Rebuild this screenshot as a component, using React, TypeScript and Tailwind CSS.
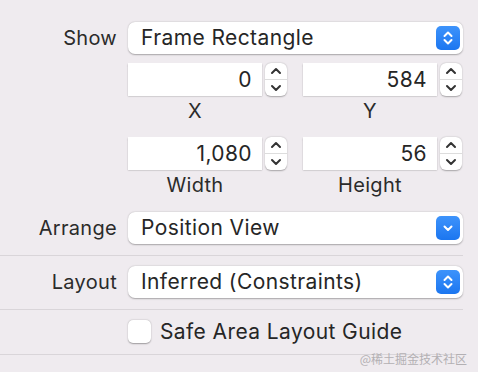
import React from "react"

const font = { fontFamily: "Inter, 'Noto Sans', sans-serif" }

const UpDown = () => (
  <svg width="12" height="16" viewBox="0 0 12 16" fill="none" stroke="white" strokeWidth="2" strokeLinecap="round" strokeLinejoin="round">
    <path d="M2.5 6 L6 2.5 L9.5 6" />
    <path d="M2.5 10 L6 13.5 L9.5 10" />
  </svg>
)

const Down = () => (
  <svg width="12" height="10" viewBox="0 0 12 10" fill="none" stroke="white" strokeWidth="2" strokeLinecap="round" strokeLinejoin="round">
    <path d="M2.5 3.5 L6 7 L9.5 3.5" />
  </svg>
)

const Popup = ({ text, single }: { text: string; single?: boolean }) => (
  <div className="flex h-[32px] w-[335px] items-center justify-between rounded-[7px] bg-white pl-[13px] pr-[3px] shadow-[0_0.5px_1.5px_rgba(0,0,0,0.3)]">
    <span className="text-[21px] leading-[24px] tracking-[0.4px] text-[#262626]">{text}</span>
    <div className="flex h-[24px] w-[24px] items-center justify-center rounded-[5px] bg-gradient-to-b from-[#3d93fb] to-[#1b76f0]">
      {single ? <Down /> : <UpDown />}
    </div>
  </div>
)

const Stepper = () => (
  <div className="flex h-[33px] w-[22px] flex-col rounded-[6px] bg-white shadow-[0_0.5px_1.5px_rgba(0,0,0,0.3)]">
    <div className="flex flex-1 items-center justify-center border-b border-[#dddddd]">
      <svg width="12" height="8" viewBox="0 0 12 8" fill="none" stroke="#333" strokeWidth="2" strokeLinecap="round" strokeLinejoin="round">
        <path d="M2 6 L6 2 L10 6" />
      </svg>
    </div>
    <div className="flex flex-1 items-center justify-center">
      <svg width="12" height="8" viewBox="0 0 12 8" fill="none" stroke="#333" strokeWidth="2" strokeLinecap="round" strokeLinejoin="round">
        <path d="M2 2 L6 6 L10 2" />
      </svg>
    </div>
  </div>
)

const NumField = ({ value, label }: { value: string; label: string }) => (
  <div className="flex w-[159px] flex-col">
    <div className="flex items-center gap-[3px]">
      <div className="flex h-[33px] w-[134px] items-center justify-end bg-white pr-[10px] text-[21px] tracking-[0.4px] text-[#262626] shadow-[0_0.5px_1.5px_rgba(0,0,0,0.3)]">
        {value}
      </div>
      <Stepper />
    </div>
    <div className="mt-[3px] w-[134px] text-center text-[20px] leading-[24px] tracking-[0.3px] text-[#2b2b2b]">{label}</div>
  </div>
)

const Row = ({ label, children }: { label: string; children: React.ReactNode }) => (
  <div className="flex items-center">
    <div className="w-[117px] text-right text-[20px] leading-[24px] tracking-[0.3px] text-[#2b2b2b]">{label}</div>
    <div className="ml-[11px]">{children}</div>
  </div>
)

export default function App() {
  return (
    <div className="flex h-[372px] w-[478px] flex-col overflow-hidden bg-[#efebef]" style={font}>
      <div className="pt-[22px]">
        <Row label="Show">
          <Popup text="Frame Rectangle" />
        </Row>
      </div>

      <div className="ml-[128px] mt-[9px] flex gap-[16px]">
        <NumField value="0" label="X" />
        <NumField value="584" label="Y" />
      </div>
      <div className="ml-[128px] mt-[14px] flex gap-[16px]">
        <NumField value="1,080" label="Width" />
        <NumField value="56" label="Height" />
      </div>

      <div className="mt-[15px]">
        <Row label="Arrange">
          <Popup text="Position View" single />
        </Row>
      </div>

      <div className="mt-[11px] h-px w-[463px] bg-[#d9d5d9]" />

      <div className="mt-[10px]">
        <Row label="Layout">
          <Popup text="Inferred (Constraints)" />
        </Row>
      </div>

      <div className="mt-[11px] h-px w-[463px] bg-[#d9d5d9]" />

      <div className="ml-[128px] mt-[10px] flex h-[23px] items-center gap-[9px]">
        <div className="h-[23px] w-[23px] rounded-[5px] bg-white shadow-[0_0.5px_1.5px_rgba(0,0,0,0.35)]" />
        <span className="text-[21px] leading-[24px] tracking-[0.4px] text-[#262626]">Safe Area Layout Guide</span>
      </div>

      <div className="relative mt-[11px] h-px w-[463px] bg-[#d9d5d9]">
        <span
          className="absolute right-[-4px] top-[-4px] text-[12px] text-[#b3b0b3]"
          style={{ fontFamily: "'Noto Sans CJK SC', sans-serif" }}
        >
          @稀土掘金技术社区
        </span>
      </div>
    </div>
  )
}
